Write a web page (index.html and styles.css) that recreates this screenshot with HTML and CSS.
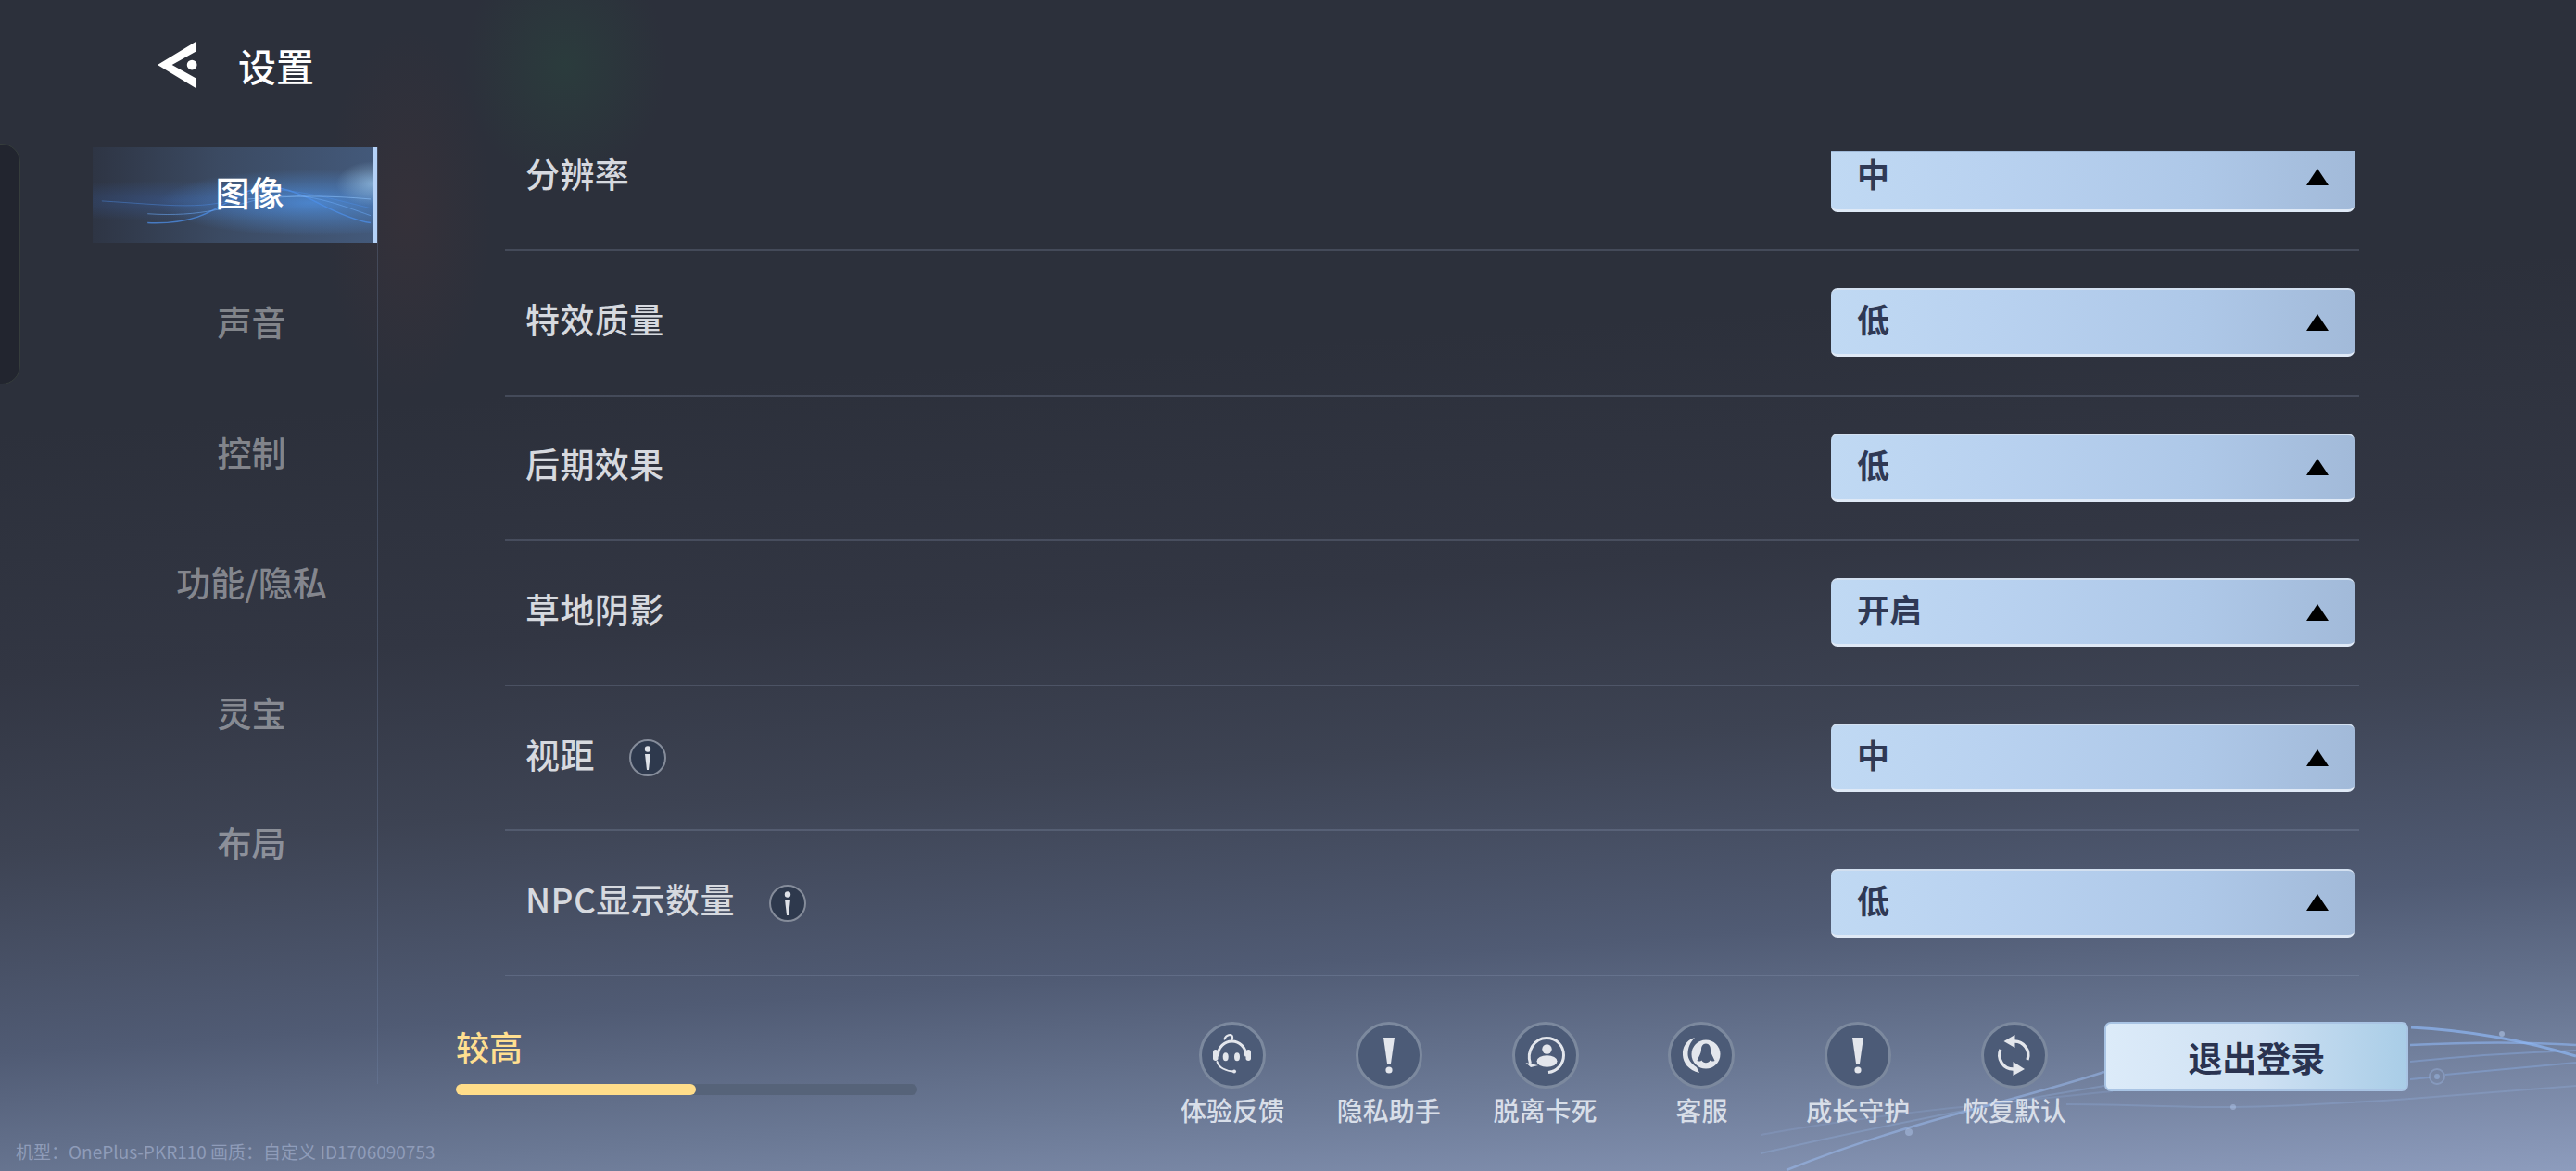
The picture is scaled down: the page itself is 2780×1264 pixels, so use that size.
FILE: index.html
```html
<!DOCTYPE html>
<html lang="zh-CN">
<head>
    <meta charset="UTF-8">
    <title>设置</title>
    <link rel="stylesheet" href="styles.css">
</head>
<body>
    <div class="app">
        <!-- decor lines behind everything -->
        <svg class="decor" viewBox="0 0 2780 1264" fill="none">
            <path d="M1928 1263C2060 1210 2170 1190 2271 1157" stroke="#9dbff5" stroke-opacity=".5" stroke-width="2.5"/>
            <path d="M1900 1245C2000 1222 2130 1195 2271 1172" stroke="#9dbff5" stroke-opacity=".25" stroke-width="2"/>
            <path d="M1900 1225C2010 1205 2110 1195 2280 1178" stroke="#9dbff5" stroke-opacity=".18" stroke-width="2"/>
            <path d="M2230 1192C2300 1192 2360 1196 2410 1195C2480 1194 2540 1190 2601 1186C2680 1180 2730 1176 2780 1172" stroke="#9dbff5" stroke-opacity=".22" stroke-width="2"/>
            <path d="M2602 1109C2660 1112 2720 1122 2780 1140" stroke="#8fb8f5" stroke-opacity=".7" stroke-width="3"/>
            <path d="M2601 1128C2660 1125 2720 1124 2780 1128" stroke="#8fb8f5" stroke-opacity=".6" stroke-width="2.5"/>
            <path d="M2601 1146C2660 1140 2720 1136 2780 1134" stroke="#8fb8f5" stroke-opacity=".35" stroke-width="2"/>
            <path d="M2601 1165L2622 1163M2639 1160L2780 1147" stroke="#8fb8f5" stroke-opacity=".35" stroke-width="2"/>
            <circle cx="2630" cy="1162" r="8" stroke="#a8c8f8" stroke-opacity=".3" stroke-width="2"/>
            <circle cx="2630" cy="1162" r="3" fill="#a8c8f8" fill-opacity=".4"/>
            <circle cx="2060" cy="1222" r="4" fill="#bcd3f7" fill-opacity=".4"/>
            <circle cx="2410" cy="1195" r="3" fill="#bcd3f7" fill-opacity=".4"/>
            <circle cx="2700" cy="1116" r="3" fill="#bcd3f7" fill-opacity=".5"/>
        </svg>

        <div class="edge-tab"></div>

        <aside class="side">
            <header class="head">
                <svg class="back-icon" viewBox="0 0 44 52">
                    <path d="M0 26L43 0V11L16 26L43 41V52Z" fill="#fff"/>
                    <circle cx="38" cy="26" r="5.5" fill="#fff"/>
                </svg>
                <span class="head-title">设置</span>
            </header>
            <nav class="nav">
                <div class="nav-item active">
                    <svg class="nav-waves" viewBox="0 0 308 103" fill="none">
                        <path d="M60 82C110 84 130 70 160 52C190 34 220 46 250 62C270 72 290 80 304 82" stroke="#4d8fe8" stroke-opacity=".75" stroke-width="1.5"/>
                        <path d="M10 58C80 62 130 70 170 50C200 40 240 50 304 66" stroke="#4d8fe8" stroke-opacity=".45"/>
                        <path d="M60 72C120 76 150 64 190 54C230 46 270 62 304 74" stroke="#6aa6f2" stroke-opacity=".6"/>
                        <path d="M170 56C220 52 260 52 304 56" stroke="#8cc0fa" stroke-opacity=".6"/>
                    </svg>
                    <span>图像</span>
                </div>
                <div class="nav-item">声音</div>
                <div class="nav-item">控制</div>
                <div class="nav-item">功能/隐私</div>
                <div class="nav-item">灵宝</div>
                <div class="nav-item">布局</div>
            </nav>
        </aside>

        <main class="content">
            <div class="list">
                <div class="rows">
                    <div class="row">
                        <span class="row-label">分辨率</span>
                        <div class="select scrolled"><span>中</span><i class="tri"></i></div>
                    </div>
                    <div class="row">
                        <span class="row-label">特效质量</span>
                        <div class="select"><span>低</span><i class="tri"></i></div>
                    </div>
                    <div class="row">
                        <span class="row-label">后期效果</span>
                        <div class="select"><span>低</span><i class="tri"></i></div>
                    </div>
                    <div class="row">
                        <span class="row-label">草地阴影</span>
                        <div class="select"><span>开启</span><i class="tri"></i></div>
                    </div>
                    <div class="row">
                        <span class="row-label">视距</span>
                        <svg class="info" viewBox="0 0 40 40">
                            <circle cx="20" cy="20" r="19" fill="#2e394d" stroke="#858c9a" stroke-width="2"/>
                            <circle cx="20" cy="10.5" r="3.2" fill="#dfe2e8"/>
                            <path d="M17 16H23L21 33H19Z" fill="#dfe2e8"/>
                        </svg>
                        <div class="select"><span>中</span><i class="tri"></i></div>
                    </div>
                    <div class="row">
                        <span class="row-label">NPC显示数量</span>
                        <svg class="info" viewBox="0 0 40 40">
                            <circle cx="20" cy="20" r="19" fill="#2e394d" stroke="#858c9a" stroke-width="2"/>
                            <circle cx="20" cy="10.5" r="3.2" fill="#dfe2e8"/>
                            <path d="M17 16H23L21 33H19Z" fill="#dfe2e8"/>
                        </svg>
                        <div class="select"><span>低</span><i class="tri"></i></div>
                    </div>
                </div>
            </div>

            <footer class="foot">
                <div class="quality">
                    <div class="quality-label">较高</div>
                    <div class="quality-track"><div class="quality-fill" style="width: 52%"></div></div>
                </div>
                <div class="tools">
                    <div class="tool">
                        <div class="tool-icon">
                            <svg viewBox="0 0 72 72" fill="none" stroke="#e3e6ec" stroke-linecap="round">
                                <path d="M20.5 36A15 15 0 0 1 50.5 36" stroke-width="3"/>
                                <path d="M27.5 18.5C29 14 35 12.5 36 16C36.5 18 35.5 20 35 21" stroke-width="2.2"/>
                                <rect x="15" y="30" width="5.5" height="12" rx="2.7" fill="#e3e6ec" stroke="none"/>
                                <rect x="50.5" y="30" width="5.5" height="12" rx="2.7" fill="#e3e6ec" stroke="none"/>
                                <ellipse cx="28.7" cy="37.7" rx="3" ry="4.5" fill="#e3e6ec" stroke="none"/>
                                <ellipse cx="41" cy="37.7" rx="3" ry="4.5" fill="#e3e6ec" stroke="none"/>
                                <path d="M19.5 43C21 49 29 53.5 37.5 53.5" stroke-width="2"/>
                                <circle cx="38" cy="53.5" r="2" fill="#e3e6ec" stroke="none"/>
                            </svg>
                        </div>
                        <div class="tool-label">体验反馈</div>
                    </div>
                    <div class="tool">
                        <div class="tool-icon">
                            <svg viewBox="0 0 72 72">
                                <path d="M30 17H42L38 45H34Z" fill="#e3e6ec"/>
                                <circle cx="36" cy="52" r="3.6" fill="#e3e6ec"/>
                            </svg>
                        </div>
                        <div class="tool-label">隐私助手</div>
                    </div>
                    <div class="tool">
                        <div class="tool-icon">
                            <svg viewBox="0 0 72 72" fill="none">
                                <circle cx="37.5" cy="29.5" r="5.2" fill="#e3e6ec"/>
                                <ellipse cx="37.5" cy="42.5" rx="11" ry="6.2" fill="#e3e6ec"/>
                                <path d="M19.5 45C15 32 24 17.5 37 17.5C48 17.5 55.5 26 55.5 36C55.5 46 48 53.5 39 54.5" stroke="#e3e6ec" stroke-width="3"/>
                                <path d="M14.5 44L28 47L20 49Z" fill="#e3e6ec"/>
                            </svg>
                        </div>
                        <div class="tool-label">脱离卡死</div>
                    </div>
                    <div class="tool">
                        <div class="tool-icon">
                            <svg viewBox="0 0 72 72">
                                <path d="M29 17C19 20 15.5 28 16 36C16.5 44 22 52 34 55L31 49C25 45 21.5 40 21.5 35C21.5 28 24 22 29 17Z" fill="#e3e6ec"/>
                                <circle cx="41" cy="35" r="15.5" fill="#e3e6ec"/>
                                <path d="M41 23.5C37.5 23.5 36 26.5 36 30C36 34 33 38 31.5 42C34 43 35.5 42.5 36.5 41.5C38 45 44 45 45.5 41.5C46.5 42.5 48 43 50.5 42C49 38 46 34 46 30C46 26.5 44.5 23.5 41 23.5Z" fill="#4c5b77"/>
                            </svg>
                        </div>
                        <div class="tool-label">客服</div>
                    </div>
                    <div class="tool">
                        <div class="tool-icon">
                            <svg viewBox="0 0 72 72">
                                <path d="M30 17H42L38 45H34Z" fill="#e3e6ec"/>
                                <circle cx="36" cy="52" r="3.6" fill="#e3e6ec"/>
                            </svg>
                        </div>
                        <div class="tool-label">成长守护</div>
                    </div>
                    <div class="tool">
                        <div class="tool-icon">
                            <svg viewBox="0 0 72 72" fill="none">
                                <path d="M35 21A15 15 0 0 1 50 41" stroke="#e3e6ec" stroke-width="3.4"/>
                                <path d="M35 51A15 15 0 0 1 21 30" stroke="#e3e6ec" stroke-width="3.4"/>
                                <path d="M24.5 21L36.5 14V28Z" fill="#e3e6ec"/>
                                <path d="M47 51L34.5 43V58Z" fill="#e3e6ec"/>
                            </svg>
                        </div>
                        <div class="tool-label">恢复默认</div>
                    </div>
                </div>
                <button class="logout">退出登录</button>
            </footer>
        </main>

        <div class="device-info">机型：OnePlus-PKR110 画质：自定义 ID1706090753</div>
    </div>
</body>
</html>
```

FILE: styles.css
```css
* {
    margin: 0;
    padding: 0;
    box-sizing: border-box;
}

body {
    font-family: "Noto Sans CJK SC", "Noto Sans", sans-serif;
    overflow: hidden;
}

.app {
    position: relative;
    display: flex;
    width: 2780px;
    height: 1264px;
    overflow: hidden;
    background:
        radial-gradient(ellipse 110px 130px at 610px 70px, rgba(40, 90, 65, 0.28), transparent),
        radial-gradient(ellipse 90px 200px at 440px 230px, rgba(100, 55, 50, 0.16), transparent),
        linear-gradient(176deg, #2c303b 0%, #2c303b 32%, #323643 50%, #3d4353 63%, #505b74 78%, #6a7894 88%, #8d9cbd 100%);
}

.decor {
    position: absolute;
    top: 0;
    left: 0;
    width: 2780px;
    height: 1264px;
}

.edge-tab {
    position: absolute;
    top: 155px;
    left: -20px;
    width: 42px;
    height: 260px;
    background: #22252f;
    border: 1px solid #363d3c;
    border-radius: 20px;
}

/* sidebar */
.side {
    position: relative;
    flex: none;
    width: 408px;
}

.head {
    display: flex;
    align-items: center;
    gap: 44px;
    height: 159px;
    padding: 0 0 19px 170px;
}

.back-icon {
    width: 43px;
    height: 52px;
}

.head-title {
    font-size: 41px;
    font-weight: 500;
    color: #fff;
}

.nav {
    display: flex;
    flex-direction: column;
    gap: 37.6px;
    height: 1011px;
    padding-left: 100px;
    border-right: 1px solid rgba(120, 140, 175, 0.28);
}

.nav-item {
    position: relative;
    display: flex;
    align-items: center;
    justify-content: center;
    height: 103px;
    padding: 0 0 8px 36px;
    font-size: 37px;
    font-weight: 500;
    color: rgba(255, 255, 255, 0.42);
}

.nav-item.active {
    color: #fff;
    background:
        radial-gradient(ellipse 40px 24px at 100% 38%, rgba(170, 215, 250, 0.6), transparent),
        radial-gradient(ellipse 165px 36px at 78% 58%, rgba(80, 150, 235, 0.72), transparent),
        radial-gradient(ellipse 200px 22px at 30% 56%, rgba(60, 110, 200, 0.3), transparent),
        linear-gradient(90deg, rgba(50, 62, 85, 0.35) 0%, #3b4a62 45%, #43597a 100%);
    border-right: 4px solid #b4d2f8;
}

.nav-item.active span {
    position: relative;
}

.nav-waves {
    position: absolute;
    top: 0;
    left: 0;
    width: 304px;
    height: 103px;
}

/* main column */
.content {
    position: relative;
    flex: 1;
    padding: 163px 0 0 84px;
}

.list {
    display: flow-root;
    width: 2001px;
    height: 891px;
    margin-left: 53px;
}

.rows {
    margin-top: -48.6px;
}

.row {
    display: flex;
    align-items: center;
    height: 156.6px;
    padding: 0 5px 0 22px;
    border-bottom: 2px solid rgba(165, 180, 210, 0.2);
}

.row-label {
    padding-bottom: 9px;
    font-size: 37px;
    font-weight: 500;
    line-height: 44px;
    letter-spacing: 0.4px;
    color: #d6d9df;
}

.info {
    width: 40px;
    height: 40px;
    margin-left: 37px;
}

.select {
    display: flex;
    align-items: center;
    justify-content: space-between;
    width: 565px;
    height: 74px;
    margin-left: auto;
    padding: 0 28px;
    font-size: 35px;
    font-weight: 700;
    color: #2f3955;
    background: linear-gradient(90deg, #c0d9f3 0%, #b9d2f0 30%, #aec8e8 70%, #a2bad9 100%);
    border-top: 2px solid #d3e0f0;
    border-bottom: 3px solid #dfe9f6;
    border-radius: 7px;
}

.select span {
    padding-bottom: 8px;
}

/* first row is scrolled under the top edge of the list */
.select.scrolled {
    height: 66px;
    margin-top: 8px;
    border-top: 1px solid #9fb9d8;
    border-radius: 0 0 7px 7px;
}

.select.scrolled span {
    padding-bottom: 16px;
}

.select.scrolled .tri {
    margin-bottom: 8px;
}

.tri {
    width: 0;
    height: 0;
    border-left: 12px solid transparent;
    border-right: 12px solid transparent;
    border-bottom: 18px solid #000;
}

/* bottom bar */
.foot {
    display: flex;
    align-items: flex-start;
    padding-top: 49px;
}

.quality {
    width: 498px;
}

.quality-label {
    height: 52px;
    font-size: 36px;
    font-weight: 500;
    line-height: 52px;
    color: #ffdf90;
}

.quality-track {
    height: 12px;
    margin-top: 15px;
    background: #566379;
    border-radius: 6px;
}

.quality-fill {
    height: 100%;
    background: #ffdd8a;
    border-radius: 6px;
}

.tools {
    display: flex;
    margin-left: 255.6px;
}

.tool {
    width: 168.8px;
    text-align: center;
}

.tool-icon {
    width: 72px;
    height: 72px;
    margin: 0 auto;
    background: #4c5b77;
    border: 3px solid #7c899e;
    border-radius: 50%;
    overflow: hidden;
}

.tool-icon svg {
    display: block;
    width: 72px;
    height: 72px;
    margin: -3px;
}

.tool-label {
    margin-top: 5px;
    font-size: 28px;
    font-weight: 500;
    line-height: 36px;
    color: #d8dee8;
}

.logout {
    width: 328px;
    height: 75px;
    margin: 0 0 0 13px;
    font-family: inherit;
    font-size: 37px;
    font-weight: 700;
    color: #2a3350;
    background: linear-gradient(90deg, #dcebf9 0%, #cfe1f3 50%, #a9cde7 100%);
    border: 2px solid #a9c4e4;
    border-radius: 7px;
}

.device-info {
    position: absolute;
    left: 17px;
    bottom: 8px;
    font-size: 19px;
    line-height: 26px;
    color: #8f9cb9;
}
```
